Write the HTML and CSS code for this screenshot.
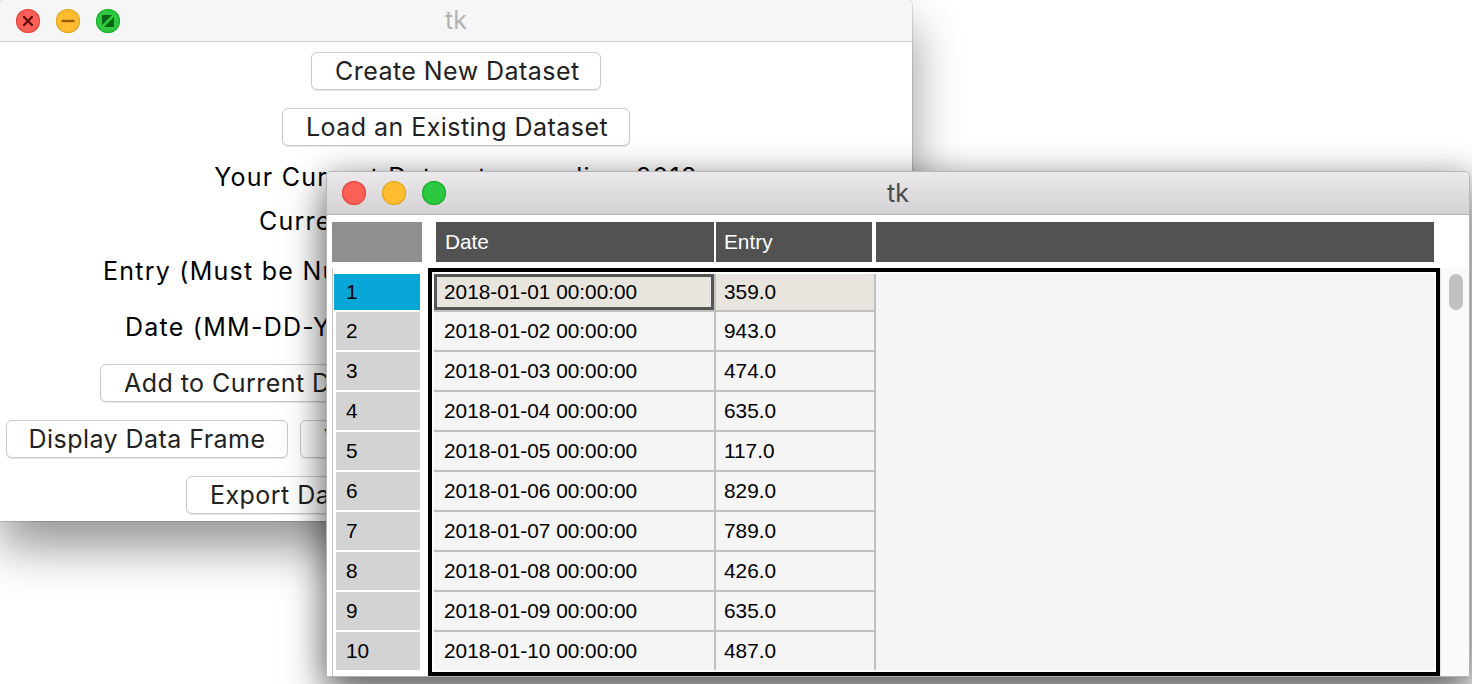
FILE: index.html
```html
<!DOCTYPE html>
<html lang="en">
<head>
<meta charset="utf-8">
<title>tk</title>
<link rel="stylesheet" href="styles.css">
</head>
<body>
<div class="desktop">

  <section class="window win-main">
    <header class="titlebar titlebar-inactive">
      <div class="lights">
        <span class="light light-close"><svg viewBox="0 0 24 24" width="24" height="24"><path d="M8 8 L16 16 M16 8 L8 16" stroke="#5a0a06" stroke-width="2.2" stroke-linecap="round"/></svg></span>
        <span class="light light-min"><svg viewBox="0 0 24 24" width="24" height="24"><path d="M5.5 12 H18.5" stroke="#9a5a0c" stroke-width="2.4"/></svg></span>
        <span class="light light-max"><svg viewBox="0 0 24 24" width="24" height="24"><path d="M6 6 H16 L6 16 Z M18 18 H8 L18 8 Z" fill="#0a6412"/></svg></span>
      </div>
      <div class="title title-inactive">tk</div>
      <div></div>
    </header>
    <div class="main-body">
      <button class="btn btn-create">Create New Dataset</button>
      <button class="btn btn-load">Load an Existing Dataset</button>
      <div class="label label-dataset">Your Current Dataset: spending_2018</div>
      <div class="label label-current">Current Entries: 10</div>
      <div class="form-row form-entry">
        <span class="label">Entry (Must be Numeric):</span>
        <span class="field"></span>
      </div>
      <div class="form-row form-date">
        <span class="label">Date (MM-DD-YYYY):</span>
        <span class="field"></span>
      </div>
      <button class="btn btn-wide btn-add">Add to Current Dataset</button>
      <div class="btn-row">
        <button class="btn btn-display">Display Data Frame</button>
        <button class="btn btn-wide btn-visual">Visualize Data</button>
        <button class="btn btn-stats">Summary Statistics</button>
      </div>
      <button class="btn btn-wide btn-export">Export Data to CSV</button>
    </div>
  </section>

  <section class="window win-table">
    <header class="titlebar titlebar-active">
      <div class="lights">
        <span class="light light-close"></span>
        <span class="light light-min"></span>
        <span class="light light-max"></span>
      </div>
      <div class="title">tk</div>
      <div></div>
    </header>
    <div class="table-body">
      <div class="corner"></div>
      <div class="col-header">
        <div class="hcell hcell-date">Date</div>
        <div class="hcell hcell-entry">Entry</div>
        <div class="hcell hcell-rest"></div>
      </div>
      <div class="index-col">
        <div class="idx idx-selected">1</div>
        <div class="idx">2</div>
        <div class="idx">3</div>
        <div class="idx">4</div>
        <div class="idx">5</div>
        <div class="idx">6</div>
        <div class="idx">7</div>
        <div class="idx">8</div>
        <div class="idx">9</div>
        <div class="idx">10</div>
      </div>
      <div class="grid-frame">
        <div class="grid-inner">
          <div class="row row-selected"><div class="cell cell-date cell-focus">2018-01-01 00:00:00</div><div class="cell cell-entry">359.0</div></div>
          <div class="row"><div class="cell cell-date">2018-01-02 00:00:00</div><div class="cell cell-entry">943.0</div></div>
          <div class="row"><div class="cell cell-date">2018-01-03 00:00:00</div><div class="cell cell-entry">474.0</div></div>
          <div class="row"><div class="cell cell-date">2018-01-04 00:00:00</div><div class="cell cell-entry">635.0</div></div>
          <div class="row"><div class="cell cell-date">2018-01-05 00:00:00</div><div class="cell cell-entry">117.0</div></div>
          <div class="row"><div class="cell cell-date">2018-01-06 00:00:00</div><div class="cell cell-entry">829.0</div></div>
          <div class="row"><div class="cell cell-date">2018-01-07 00:00:00</div><div class="cell cell-entry">789.0</div></div>
          <div class="row"><div class="cell cell-date">2018-01-08 00:00:00</div><div class="cell cell-entry">426.0</div></div>
          <div class="row"><div class="cell cell-date">2018-01-09 00:00:00</div><div class="cell cell-entry">635.0</div></div>
          <div class="row"><div class="cell cell-date">2018-01-10 00:00:00</div><div class="cell cell-entry">487.0</div></div>
        </div>
      </div>
      <div class="scrollbar"><div class="thumb"></div></div>
    </div>
  </section>

</div>
</body>
</html>
```

FILE: styles.css
```css
* { box-sizing: border-box; }

html, body {
  margin: 0;
  padding: 0;
  background: #ffffff;
}

.desktop {
  position: relative;
  width: 1472px;
  height: 684px;
  overflow: hidden;
  background: #ffffff;
}

/* ---------- windows ---------- */
.window {
  position: absolute;
  display: flex;
  flex-direction: column;
  border-radius: 5px 5px 0 0;
  background: #ffffff;
}

.win-main {
  left: 0;
  top: 0;
  width: 912px;
  height: 521px;
  box-shadow: 0 0 0 1px rgba(0,0,0,0.12), 0 26px 48px rgba(0,0,0,0.42);
}

.win-table {
  left: 326px;
  top: 171px;
  width: 1144px;
  height: 506px;
  border: 1px solid #b5b5b5;
  box-shadow: 0 20px 40px rgba(0,0,0,0.55), 0 0 30px rgba(0,0,0,0.22);
}

/* ---------- title bars ---------- */
.titlebar {
  display: grid;
  grid-template-columns: 1fr auto 1fr;
  align-items: center;
  border-radius: 5px 5px 0 0;
  flex: none;
}

.titlebar-inactive {
  height: 42px;
  background: #f6f6f6;
  border-bottom: 1px solid #d0d0d0;
  padding: 0 16px;
}

.titlebar-active {
  height: 43px;
  background: linear-gradient(#ebe9eb, #d4d2d4);
  border-bottom: 1px solid #b3b1b3;
  padding: 0 15px;
}

.lights {
  display: flex;
  gap: 16px;
  align-items: center;
}

.light {
  display: block;
  width: 24px;
  height: 24px;
  border-radius: 50%;
}
.light svg { display: block; }

.light-close { background: #fd5f57; box-shadow: inset 0 0 0 1px #e0443e; }
.light-min   { background: #febc2e; box-shadow: inset 0 0 0 1px #dea123; }
.light-max   { background: #2bc840; box-shadow: inset 0 0 0 1px #1aab29; }

.title {
  font-family: Inter, "Noto Sans", sans-serif;
  font-size: 25px;
  color: #4a4a4a;
  line-height: 1;
}
.title-inactive { color: #b3b3b3; }

/* ---------- main window body ---------- */
.main-body {
  display: flex;
  flex-direction: column;
  align-items: center;
  padding-top: 10px;
  font-family: Inter, "Noto Sans", sans-serif;
  font-size: 25px;
}

.btn {
  height: 38px;
  padding: 0 23px;
  border: 1px solid #c9c9c9;
  border-radius: 6px;
  background: #ffffff;
  color: #222222;
  font-family: Inter, "Noto Sans", sans-serif;
  font-size: 25px;
  letter-spacing: 0.45px;
  line-height: 36px;
  box-shadow: 0 1px 1px rgba(0,0,0,0.10);
  white-space: nowrap;
  flex: none;
}

.btn-create { width: 290px; }
.btn-load   { width: 348px; margin-top: 18px; }

.btn-wide { text-align: left; }
.btn-add    { width: 712px; margin-top: 17px; }
.btn-export { width: 540px; margin-top: 18px; }

.btn-row {
  display: flex;
  gap: 12px;
  width: 900px;
  margin-top: 18px;
}
.btn-display { width: 282px; padding: 0 10px; }
.btn-visual  { width: 280px; }
.btn-stats   { width: 302px; }

.label {
  color: #000000;
  line-height: 30px;
  letter-spacing: 1.25px;
  white-space: nowrap;
}
.label-dataset { margin-top: 16px; }
.label-current { margin-top: 14px; width: 394px; }

.form-row {
  display: flex;
  align-items: center;
  gap: 12px;
  height: 40px;
}
.form-entry { width: 706px; margin-top: 15px; }
.form-date  { width: 662px; margin-top: 16px; }

.field {
  flex: 1;
  height: 34px;
  border: 1px solid #c9c9c9;
  background: #fff;
}

/* ---------- table window body ---------- */
.table-body {
  flex: 1;
  display: grid;
  grid-template-columns: 90px 1018px 29px;
  grid-template-rows: 40px 408px;
  row-gap: 6px;
  padding: 7px 0 0 5px;
  background: #ffffff;
  font-family: "Liberation Sans", Arial, sans-serif;
  font-size: 20.8px;
  overflow: hidden;
}

.corner {
  grid-column: 1;
  grid-row: 1;
  background: #8f8f8f;
}

.col-header {
  grid-column: 2;
  grid-row: 1;
  display: flex;
  gap: 2px;
  padding-left: 8px;
  margin-left: 6px;
}

.hcell {
  flex: none;
  background: #525252;
  color: #ffffff;
  line-height: 40px;
  padding-left: 9px;
}
.hcell-date  { width: 278px; }
.hcell-entry { width: 156px; padding-left: 8px; margin-right: 2px; }
.hcell-rest  { width: 558px; }

.index-col {
  grid-column: 1;
  grid-row: 2;
  display: flex;
  flex-direction: column;
  padding: 6px 2px 0 0;
  border-left: 1px solid #c4c4c4;
  overflow: hidden;
}

.idx {
  flex: none;
  height: 40px;
  margin-left: 3px;
  background: #d3d3d3;
  border-bottom: 2px solid #ffffff;
  padding-left: 10px;
  line-height: 38px;
  color: #000;
}
.idx-selected {
  height: 38px;
  line-height: 36px;
  margin-left: 1px;
  padding-left: 12px;
  background: #06a7d6;
}

.grid-frame {
  grid-column: 2;
  grid-row: 2;
  margin-left: 6px;
  border: 4px solid #000000;
  padding: 2px;
  background: #ffffff;
}

.grid-inner {
  height: 396px;
  overflow: hidden;
  background: #f5f5f5;
}

.row {
  display: flex;
  height: 40px;
}
.row-selected { height: 38px; }

.cell {
  flex: none;
  border-bottom: 2px solid #c0c0c0;
  border-right: 2px solid #c0c0c0;
  color: #000;
  display: flex;
  align-items: center;
}
.cell-date  { width: 282px; padding-left: 10px; }
.cell-entry { width: 160px; padding-left: 8px; }

.row-selected .cell { background: #e8e4de; }
.cell-focus {
  box-shadow: inset 0 0 0 3px #555555;
}

.scrollbar {
  grid-column: 3;
  grid-row: 2;
  background: #fafafa;
  border-left: 1px solid #e6e6e6;
  padding: 6px 0 0 8px;
}
.thumb {
  width: 14px;
  height: 36px;
  border-radius: 7px;
  background: #c1c1c1;
}
```
